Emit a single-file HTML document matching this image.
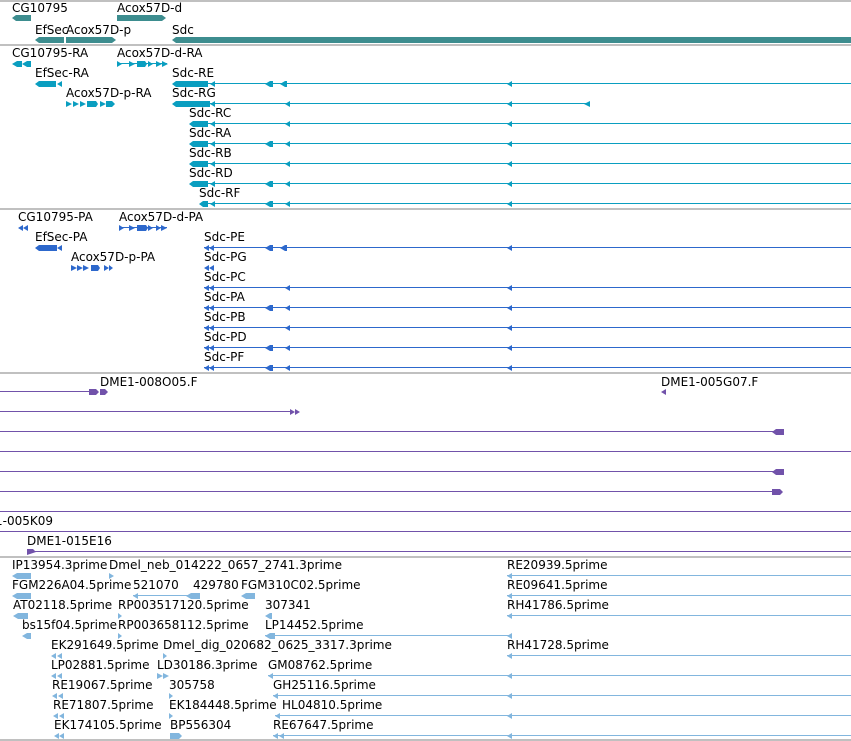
<!DOCTYPE html>
<html><head><meta charset="utf-8"><style>
html,body{margin:0;padding:0;background:#fff;}
svg{display:block}
text{font-family:"DejaVu Sans","Liberation Sans",sans-serif;font-size:12px;fill:#000}
</style></head><body>
<svg width="851" height="741" viewBox="0 0 851 741" xmlns="http://www.w3.org/2000/svg">
<g fill="#c0c0c0">
<rect x="0" y="0" width="851" height="2"/>
<rect x="0" y="44" width="851" height="2"/>
<rect x="0" y="208" width="851" height="2"/>
<rect x="0" y="372" width="851" height="2"/>
<rect x="0" y="556" width="851" height="2"/>
<rect x="0" y="739" width="851" height="2"/>
</g>

<g fill="#3d8d8f">
<polygon points="12,18 16,15 31,15 31,21 16,21"/>
<polygon points="117,15 162,15 166,18 162,21 117,21"/>
<polygon points="35,40 39,37 64,37 64,43 39,43"/>
<polygon points="66,37 112,37 116,40 112,43 66,43"/>
<polygon points="172,40 176,37 851,37 851,43 176,43"/>
</g>
<text x="12" y="12">CG10795</text>
<text x="117" y="12">Acox57D-d</text>
<text x="35" y="34">EfSec</text>
<text x="66" y="34">Acox57D-p</text>
<text x="172" y="34">Sdc</text>

<g fill="#0a9ec0">
<text x="12" y="57" fill="#000">CG10795-RA</text>
<text x="117" y="57" fill="#000">Acox57D-d-RA</text>
<polygon points="12,64 17,61 22,61 22,67 17,67"/><polygon points="22,64 27,61 31,61 31,67 27,67"/>
<rect x="117" y="63" width="50" height="1"/>
<polygon points="117,61 122,64 117,67"/><polygon points="129,61 135,64 129,67"/><polygon points="137,61 145,61 147,64 145,67 137,67"/><polygon points="148,61 153,64 148,67"/><polygon points="156,61 162,64 156,67"/><polygon points="162,61 168,64 162,67"/>
<text x="35" y="77" fill="#000">EfSec-RA</text>
<polygon points="35,84 39,81 56,81 56,87 39,87"/><polygon points="57,84 62,81 62,87"/>
<text x="66" y="97" fill="#000">Acox57D-p-RA</text>
<polygon points="66,101 72,104 66,107"/><polygon points="73,101 79,104 73,107"/><polygon points="80,101 86,104 80,107"/><polygon points="87,101 96,101 98,104 96,107 87,107"/><polygon points="100,101 106,104 100,107"/><polygon points="106,101 112,101 115,104 112,107 106,107"/>

<text x="172" y="77" fill="#000">Sdc-RE</text>
<polygon points="172,84 176,81 208,81 208,87 176,87"/><rect x="208" y="83" width="643" height="1"/>
<polygon points="210,84 215,81 215,87"/><polygon points="265,84 270,81 273,81 273,87 270,87"/><polygon points="280,84 285,81 287,81 287,87 285,87"/><polygon points="507,84 512,81 512,87"/>

<text x="172" y="97" fill="#000">Sdc-RG</text>
<polygon points="172,104 176,101 210,101 210,107 176,107"/><rect x="210" y="103" width="380" height="1"/>
<polygon points="210,104 215,101 215,107"/><polygon points="285,104 290,101 290,107"/><polygon points="507,104 512,101 512,107"/><polygon points="584,104 590,101 590,107"/>

<text x="189" y="117" fill="#000">Sdc-RC</text>
<polygon points="189,124 193,121 208,121 208,127 193,127"/><rect x="208" y="123" width="643" height="1"/>
<polygon points="210,124 215,121 215,127"/><polygon points="285,124 290,121 290,127"/><polygon points="507,124 512,121 512,127"/>

<text x="189" y="137" fill="#000">Sdc-RA</text>
<polygon points="189,144 193,141 208,141 208,147 193,147"/><rect x="208" y="143" width="643" height="1"/>
<polygon points="210,144 215,141 215,147"/><polygon points="265,144 270,141 273,141 273,147 270,147"/><polygon points="285,144 290,141 290,147"/><polygon points="507,144 512,141 512,147"/>

<text x="189" y="157" fill="#000">Sdc-RB</text>
<polygon points="189,164 193,161 208,161 208,167 193,167"/><rect x="208" y="163" width="643" height="1"/>
<polygon points="210,164 215,161 215,167"/><polygon points="285,164 290,161 290,167"/><polygon points="507,164 512,161 512,167"/>

<text x="189" y="177" fill="#000">Sdc-RD</text>
<polygon points="189,184 193,181 208,181 208,187 193,187"/><rect x="208" y="183" width="643" height="1"/>
<polygon points="210,184 215,181 215,187"/><polygon points="265,184 270,181 273,181 273,187 270,187"/><polygon points="285,184 290,181 290,187"/><polygon points="507,184 512,181 512,187"/>

<text x="199" y="197" fill="#000">Sdc-RF</text>
<polygon points="199,204 203,201 208,201 208,207 203,207"/><rect x="208" y="203" width="643" height="1"/>
<polygon points="210,204 215,201 215,207"/><polygon points="265,204 270,201 273,201 273,207 270,207"/><polygon points="285,204 290,201 290,207"/><polygon points="507,204 512,201 512,207"/>
</g>

<g fill="#2d68cc">
<text x="18" y="221" fill="#000">CG10795-PA</text>
<polygon points="18,228 23,225 23,231"/><polygon points="23,228 28,225 28,231"/>
<text x="119" y="221" fill="#000">Acox57D-d-PA</text>
<rect x="119" y="227" width="48" height="1"/>
<polygon points="119,225 124,228 119,231"/><polygon points="129,225 135,228 129,231"/><polygon points="137,225 146,225 148,228 146,231 137,231"/><polygon points="148,225 153,228 148,231"/><polygon points="156,225 161,228 156,231"/><polygon points="161,225 167,228 161,231"/>
<text x="35" y="241" fill="#000">EfSec-PA</text>
<polygon points="35,248 39,245 57,245 57,251 39,251"/><polygon points="57,248 62,245 62,251"/>
<text x="71" y="261" fill="#000">Acox57D-p-PA</text>
<polygon points="71,265 77,268 71,271"/><polygon points="77,265 83,268 77,271"/><polygon points="83,265 89,268 83,271"/><polygon points="91,265 98,265 100,268 98,271 91,271"/><polygon points="104,265 109,268 104,271"/><polygon points="109,265 113,268 109,271"/>

<text x="204" y="241" fill="#000">Sdc-PE</text>
<rect x="204" y="247" width="647" height="1"/>
<polygon points="204,248 209,245 209,251"/><polygon points="209,248 214,245 214,251"/><polygon points="265,248 270,245 273,245 273,251 270,251"/><polygon points="280,248 285,245 287,245 287,251 285,251"/><polygon points="507,248 512,245 512,251"/>

<text x="204" y="261" fill="#000">Sdc-PG</text>
<polygon points="204,268 209,265 209,271"/><polygon points="209,268 214,265 214,271"/>

<text x="204" y="281" fill="#000">Sdc-PC</text>
<rect x="204" y="287" width="647" height="1"/>
<polygon points="204,288 209,285 209,291"/><polygon points="209,288 214,285 214,291"/><polygon points="285,288 290,285 290,291"/><polygon points="507,288 512,285 512,291"/>

<text x="204" y="301" fill="#000">Sdc-PA</text>
<rect x="204" y="307" width="647" height="1"/>
<polygon points="204,308 209,305 209,311"/><polygon points="209,308 214,305 214,311"/><polygon points="265,308 270,305 273,305 273,311 270,311"/><polygon points="285,308 290,305 290,311"/><polygon points="507,308 512,305 512,311"/>

<text x="204" y="321" fill="#000">Sdc-PB</text>
<rect x="204" y="327" width="647" height="1"/>
<polygon points="204,328 209,325 209,331"/><polygon points="209,328 214,325 214,331"/><polygon points="285,328 290,325 290,331"/><polygon points="507,328 512,325 512,331"/>

<text x="204" y="341" fill="#000">Sdc-PD</text>
<rect x="204" y="347" width="647" height="1"/>
<polygon points="204,348 209,345 209,351"/><polygon points="209,348 214,345 214,351"/><polygon points="265,348 270,345 273,345 273,351 270,351"/><polygon points="285,348 290,345 290,351"/><polygon points="507,348 512,345 512,351"/>

<text x="204" y="361" fill="#000">Sdc-PF</text>
<rect x="204" y="367" width="647" height="1"/>
<polygon points="204,368 209,365 209,371"/><polygon points="209,368 214,365 214,371"/><polygon points="265,368 270,365 273,365 273,371 270,371"/><polygon points="285,368 290,365 290,371"/><polygon points="507,368 512,365 512,371"/>
</g>

<g fill="#7152aa">
<text x="100" y="386" fill="#000">DME1-008O05.F</text>
<rect x="0" y="391" width="92" height="1"/>
<polygon points="89,389 96,389 99,392 96,395 89,395"/><polygon points="100,389 105,389 108,392 105,395 100,395"/>
<text x="661" y="386" fill="#000">DME1-005G07.F</text>
<polygon points="661,392 666,389 666,395"/>
<rect x="0" y="411" width="292" height="1"/>
<polygon points="290,409 295,412 290,415"/><polygon points="295,409 300,412 295,415"/>
<rect x="0" y="431" width="775" height="1"/>
<polygon points="772,432 776,429 784,429 784,435 776,435"/>
<rect x="0" y="451" width="851" height="1"/>
<rect x="0" y="471" width="775" height="1"/>
<polygon points="772,472 776,469 784,469 784,475 776,475"/>
<rect x="0" y="491" width="775" height="1"/>
<polygon points="772,489 780,489 783,492 780,495 772,495"/>
<rect x="0" y="511" width="851" height="1"/>
<text x="-5" y="525" fill="#000">1-005K09</text>
<rect x="0" y="531" width="851" height="1"/>
<text x="27" y="545" fill="#000">DME1-015E16</text>
<rect x="27" y="551" width="824" height="1"/>
<polygon points="27,549 33,549 36,552 27,555"/>
</g>

<g fill="#82b6de">
<text x="12" y="569" fill="#000">IP13954.3prime</text>
<polygon points="12,576 17,573 31,573 31,579 17,579"/>
<text x="109" y="569" fill="#000" textLength="233" lengthAdjust="spacingAndGlyphs">Dmel_neb_014222_0657_2741.3prime</text>
<polygon points="109,573 114,576 109,579"/>
<text x="507" y="569" fill="#000">RE20939.5prime</text>
<rect x="507" y="575" width="344" height="1"/><polygon points="507,576 512,573 512,579"/>

<text x="12" y="589" fill="#000">FGM226A04.5prime</text>
<polygon points="12,596 17,593 31,593 31,599 17,599"/>
<text x="133" y="589" fill="#000">521070</text>
<rect x="133" y="595" width="55" height="1"/><polygon points="133,596 138,593 138,599"/>
<text x="193" y="589" fill="#000">429780</text>
<polygon points="186,596 191,593 200,593 200,599 191,599"/>
<text x="241" y="589" fill="#000">FGM310C02.5prime</text>
<polygon points="241,596 246,593 255,593 255,599 246,599"/>
<text x="507" y="589" fill="#000">RE09641.5prime</text>
<rect x="507" y="595" width="344" height="1"/><polygon points="507,596 512,593 512,599"/>

<text x="13" y="609" fill="#000">AT02118.5prime</text>
<polygon points="13,616 18,613 28,613 28,619 18,619"/>
<text x="118" y="609" fill="#000">RP003517120.5prime</text>
<polygon points="118,613 122,616 118,619"/>
<text x="265" y="609" fill="#000">307341</text>
<polygon points="265,616 270,613 272,613 272,619 270,619"/>
<text x="507" y="609" fill="#000">RH41786.5prime</text>
<rect x="507" y="615" width="344" height="1"/><polygon points="507,616 512,613 512,619"/>

<text x="22" y="629" fill="#000">bs15f04.5prime</text>
<polygon points="22,636 27,633 31,633 31,639 27,639"/>
<text x="118" y="629" fill="#000">RP003658112.5prime</text>
<polygon points="118,633 122,636 118,639"/>
<text x="265" y="629" fill="#000">LP14452.5prime</text>
<rect x="265" y="635" width="247" height="1"/><polygon points="265,636 270,633 275,633 275,639 270,639"/><polygon points="507,636 512,633 512,639"/>

<text x="51" y="649" fill="#000">EK291649.5prime</text>
<polygon points="51,656 56,653 56,659"/><polygon points="57,656 62,653 62,659"/>
<text x="163" y="649" fill="#000" textLength="229" lengthAdjust="spacingAndGlyphs">Dmel_dig_020682_0625_3317.3prime</text>
<polygon points="163,653 167,656 163,659"/>
<text x="507" y="649" fill="#000">RH41728.5prime</text>
<rect x="507" y="655" width="344" height="1"/><polygon points="507,656 512,653 512,659"/>

<text x="51" y="669" fill="#000">LP02881.5prime</text>
<polygon points="51,676 56,673 56,679"/><polygon points="57,676 62,673 62,679"/>
<text x="157" y="669" fill="#000">LD30186.3prime</text>
<polygon points="157,673 163,676 157,679"/><polygon points="163,673 169,676 163,679"/>
<text x="268" y="669" fill="#000">GM08762.5prime</text>
<rect x="268" y="675" width="583" height="1"/><polygon points="268,676 273,673 273,679"/><polygon points="507,676 512,673 512,679"/>

<text x="52" y="689" fill="#000">RE19067.5prime</text>
<polygon points="52,696 57,693 57,699"/><polygon points="58,696 63,693 63,699"/>
<text x="169" y="689" fill="#000">305758</text>
<polygon points="169,693 173,696 169,699"/>
<text x="273" y="689" fill="#000">GH25116.5prime</text>
<rect x="273" y="695" width="578" height="1"/><polygon points="273,696 278,693 278,699"/><polygon points="507,696 512,693 512,699"/>

<text x="53" y="709" fill="#000">RE71807.5prime</text>
<polygon points="53,716 58,713 58,719"/><polygon points="59,716 64,713 64,719"/>
<text x="169" y="709" fill="#000">EK184448.5prime</text>
<polygon points="169,713 173,716 169,719"/>
<text x="282" y="709" fill="#000">HL04810.5prime</text>
<rect x="275" y="715" width="576" height="1"/><polygon points="275,716 280,713 280,719"/><polygon points="507,716 512,713 512,719"/>

<text x="54" y="729" fill="#000">EK174105.5prime</text>
<polygon points="54,736 59,733 59,739"/><polygon points="59,736 64,733 64,739"/>
<text x="170" y="729" fill="#000">BP556304</text>
<polygon points="170,733 179,733 182,736 179,739 170,739"/>
<text x="273" y="729" fill="#000">RE67647.5prime</text>
<rect x="273" y="735" width="578" height="1"/><polygon points="273,736 278,733 278,739"/><polygon points="279,736 284,733 284,739"/><polygon points="507,736 512,733 512,739"/>
</g>
</svg>
</body></html>
